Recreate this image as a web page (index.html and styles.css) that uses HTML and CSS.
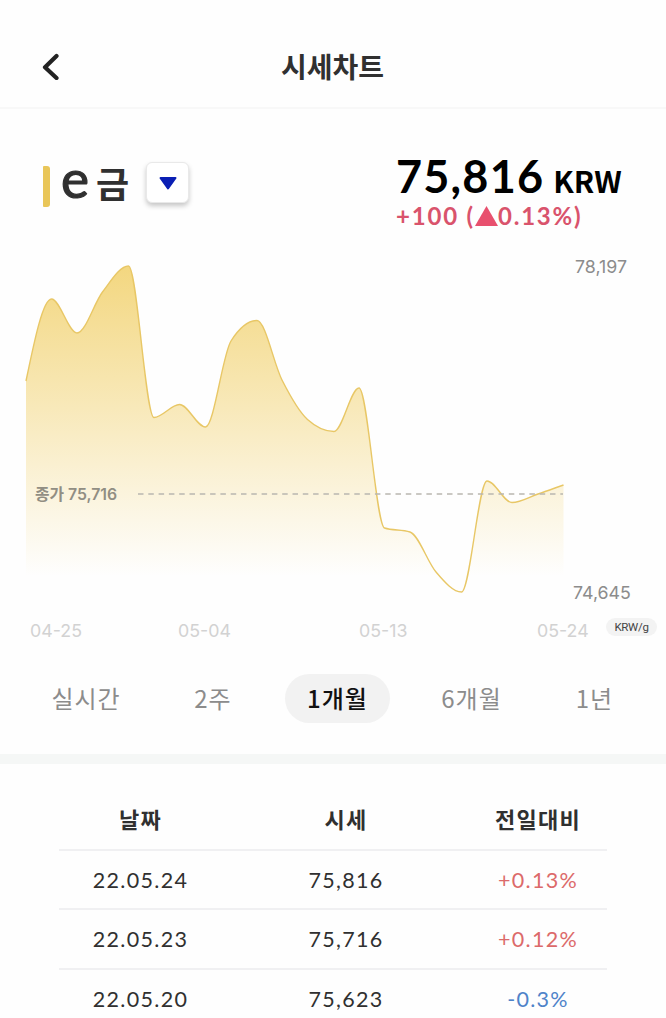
FILE: index.html
```html
<!DOCTYPE html>
<html lang="ko">
<head>
  <meta charset="UTF-8" />
  <meta name="viewport" content="width=device-width, initial-scale=1.0"/>
  <title>시세차트</title>
  <link rel="stylesheet" href="styles.css">
</head>
<body>

  <!-- HEADER -->
  <header class="header">
    <button class="back-btn" aria-label="뒤로">
      <svg width="20" height="28" viewBox="0 0 20 28">
        <path d="M16.5 4 L5 15.2 L16.5 26" fill="none" stroke="#222" stroke-width="4.2" stroke-linecap="round" stroke-linejoin="round" />
      </svg>
    </button>
    <h1 class="title">시세차트</h1>
  </header>

  <!-- PRICE SUMMARY -->
  <section class="summary">
    <div class="asset">
      <span class="asset-bar"></span>
      <h2 class="asset-name"><span class="asset-e">e</span><span>금</span></h2>
      <button class="asset-select" aria-label="종목 선택">
        <svg width="18" height="14" viewBox="0 0 18 14">
          <path d="M1.5 2 H16.5 L9 12.5 Z" fill="#0a1fb4" stroke="#0a1fb4" stroke-width="2" stroke-linejoin="round" />
        </svg>
      </button>
    </div>
    <div class="price">
      <div class="price-now">75,816<span class="price-unit">KRW</span></div>
      <div class="price-diff">
        <span>+100 (</span>
        <svg width="23" height="20" viewBox="0 0 23 20"><path d="M11.5 0 L23 20 H0 Z" fill="#e8506e" /></svg>
        <span>0.13%)</span>
      </div>
    </div>
  </section>

  <!-- CHART -->
  <section class="chart">
    <div class="chart-main">
      <svg class="plot" width="540" height="340" viewBox="24 256 540 340">
        <defs>
          <linearGradient id="gold" gradientUnits="userSpaceOnUse" x1="0" y1="266" x2="0" y2="576">
            <stop offset="0" stop-color="#f3d780" />
            <stop offset="1" stop-color="#f3d780" stop-opacity="0" />
          </linearGradient>
        </defs>
        <path id="area" fill="url(#gold)" />
        <path id="line" fill="none" stroke="#e8c766" stroke-width="1.4" />
        <line x1="138" y1="494" x2="563" y2="494" stroke="#b9b7b0" stroke-width="1.6" stroke-dasharray="5.5 4.8" />
        <text class="close-label" x="35" y="500">종가 75,716</text>
      </svg>
      <div class="y-axis">
        <span>78,197</span>
        <span class="y-low">74,645</span>
      </div>
    </div>
    <div class="x-axis">
      <span>04-25</span>
      <span>05-04</span>
      <span>05-13</span>
      <span>05-24</span>
      <span class="unit-badge">KRW/g</span>
    </div>
  </section>

  <!-- PERIOD TABS -->
  <nav class="tabs">
    <a class="tab" href="#">실시간</a>
    <a class="tab" href="#">2주</a>
    <a class="tab active" href="#">1개월</a>
    <a class="tab" href="#">6개월</a>
    <a class="tab" href="#">1년</a>
  </nav>

  <!-- DAILY PRICES -->
  <section class="history">
    <div class="row head"><span>날짜</span><span>시세</span><span>전일대비</span></div>
    <div class="row"><span class="date">22.05.24</span><span>75,816</span><span class="up">+0.13%</span></div>
    <div class="row"><span class="date">22.05.23</span><span>75,716</span><span class="up">+0.12%</span></div>
    <div class="row"><span class="date">22.05.20</span><span>75,623</span><span class="down">-0.3%</span></div>
  </section>

  <script src="chart.js"></script>
</body>
</html>
```
FILE: styles.css
```css
* {
  margin: 0;
  padding: 0;
  box-sizing: border-box;
}

body {
  width: 666px;
  height: 1018px;
  overflow: hidden;
  background: #fefefe;
  color: #303030;
  font-family: "Lato", "Noto Sans CJK KR", sans-serif;
}

button {
  border: none;
  background: none;
}

svg {
  display: block;
}

/* Header */
.header {
  height: 109px;
  padding: 25px 41px 0 40px;
  border-bottom: 2px solid #f8f8f8;
  display: grid;
  grid-template-columns: 40px 1fr 40px;
  align-items: center;
}

.title {
  font-family: "Noto Sans CJK KR", sans-serif;
  font-size: 28px;
  line-height: 40px;
  font-weight: 700;
  text-align: center;
}

/* Price summary */
.summary {
  height: 147px;
  padding: 43px 43px 0;
  display: flex;
  justify-content: space-between;
}

.asset {
  display: flex;
  align-items: flex-start;
}

.asset-bar {
  width: 7px;
  height: 41px;
  margin-top: 14px;
  background: #e9c659;
  border-radius: 1px 3px 3px 1px;
}

.asset-name {
  width: 96px;
  padding-left: 11px;
  display: flex;
  gap: 7px;
  font-family: "Noto Sans CJK KR", sans-serif;
  font-size: 36px;
  line-height: 60px;
  font-weight: 700;
  white-space: nowrap;
}

.asset-e {
  font-family: "Lato", sans-serif;
  font-size: 53px;
  line-height: 51px;
  font-weight: 400;
  -webkit-text-stroke: 1.2px #303030;
}

.asset-select {
  width: 43px;
  height: 41px;
  margin-top: 10px;
  display: flex;
  align-items: center;
  justify-content: center;
  background: #fff;
  border: 1px solid #e9e9e9;
  border-radius: 6px;
  box-shadow: 0 3px 5px rgba(0, 0, 0, 0.22);
}

.price {
  width: 227px;
  white-space: nowrap;
}

.price-now {
  font-size: 45px;
  line-height: 48px;
  font-weight: 700;
  letter-spacing: 1.2px;
  color: #000;
}

.price-unit {
  margin-left: 9px;
  font-family: "Noto Sans CJK KR", sans-serif;
  font-size: 30px;
  letter-spacing: 0;
}

.price-diff {
  display: flex;
  align-items: center;
  margin-top: -2px;
  font-size: 24px;
  line-height: 28px;
  font-weight: 700;
  letter-spacing: 1.8px;
  color: #d9536c;
}

/* Chart */
.chart {
  height: 400px;
  padding-left: 24px;
  font-family: "Inter", "Noto Sans CJK KR", sans-serif;
}

.chart-main {
  display: flex;
}

.close-label {
  font-size: 15.8px;
  font-weight: 600;
  fill: #918e83;
}

.y-axis {
  height: 348px;
  padding-left: 9px;
  display: flex;
  flex-direction: column;
  justify-content: space-between;
  font-size: 17.8px;
  line-height: 22px;
  color: #8c8c8c;
}

.y-axis span {
  padding-left: 2px;
}

.y-axis .y-low {
  padding-left: 0;
}

.x-axis {
  margin-top: 16px;
  padding: 0 9px 0 6px;
  display: grid;
  grid-template-columns: 148px 181px 178px 69px 51px;
  font-size: 17.8px;
  line-height: 22px;
  color: #d2d2d2;
}

.unit-badge {
  height: 18px;
  margin-top: -2px;
  border-radius: 9px;
  background: #f3f3f3;
  color: #444;
  font-family: "Roboto", sans-serif;
  font-size: 11.5px;
  line-height: 18px;
  letter-spacing: -0.3px;
  text-align: center;
}

/* Tabs */
.tabs {
  height: 108px;
  padding: 18px 30px 0 31px;
  border-bottom: 10px solid #f5f7f6;
  display: grid;
  grid-template-columns: 110px 144px 105px 163px 83px;
  align-items: start;
}

.tab {
  height: 49px;
  border-radius: 25px;
  font-family: "Noto Sans CJK KR", sans-serif;
  font-size: 24px;
  line-height: 48px;
  letter-spacing: 1px;
  text-align: center;
  text-decoration: none;
  color: #8c8c8c;
}

.tab.active {
  background: #f2f2f2;
  color: #111;
  font-weight: 500;
}

/* History table */
.history {
  margin: 0 59px;
  padding-top: 27px;
}

.row {
  height: 59.5px;
  padding-top: 1px;
  border-bottom: 2px solid #f0f0f2;
  display: grid;
  grid-template-columns: 163px 248px 136px;
  align-items: center;
  text-align: center;
  font-size: 21.5px;
  letter-spacing: 1.3px;
}

.row.head {
  padding: 0 0 4px;
  font-family: "Noto Sans CJK KR", sans-serif;
  font-size: 22px;
  font-weight: 700;
}

.up {
  color: #dc6a6a;
}

.down {
  color: #4f83c9;
}
```
FILE: chart.js
```js
const points = [
  [26, 381], [51.5, 299], [77, 333], [102.5, 292], [128.5, 266],
  [154, 417.5], [179.5, 404.5], [205.5, 427], [231, 341], [257, 320.5],
  [282, 380], [307.5, 419.5], [334, 431.5], [359, 388], [384.5, 528],
  [410, 532], [436, 572], [461.5, 592], [487, 481], [512, 502.5],
  [538, 494], [563.5, 485]
];

// slope from point i to the next one
const slope = (i) => (points[i + 1][1] - points[i][1]) / (points[i + 1][0] - points[i][0]);

// monotone tangent: flat at every peak and dip
function tangent(i) {
  if (i === 0) return (3 * slope(0) - tangent(1)) / 2;
  if (i === points.length - 1) return slope(i - 1);
  const a = slope(i - 1);
  const b = slope(i);
  if (a * b <= 0) return 0;
  return Math.sign(a) * Math.min(Math.abs(a), Math.abs(b), Math.abs(a + b) / 4) * 2;
}

let d = `M${points[0]}`;
for (let i = 1; i < points.length; i++) {
  const [x0, y0] = points[i - 1];
  const [x1, y1] = points[i];
  const dx = (x1 - x0) / 3;
  d += ` C${x0 + dx},${y0 + dx * tangent(i - 1)} ${x1 - dx},${y1 - dx * tangent(i)} ${x1},${y1}`;
}

document.getElementById("line").setAttribute("d", d);
document.getElementById("area").setAttribute("d", `${d} V593 H26 Z`);
```
